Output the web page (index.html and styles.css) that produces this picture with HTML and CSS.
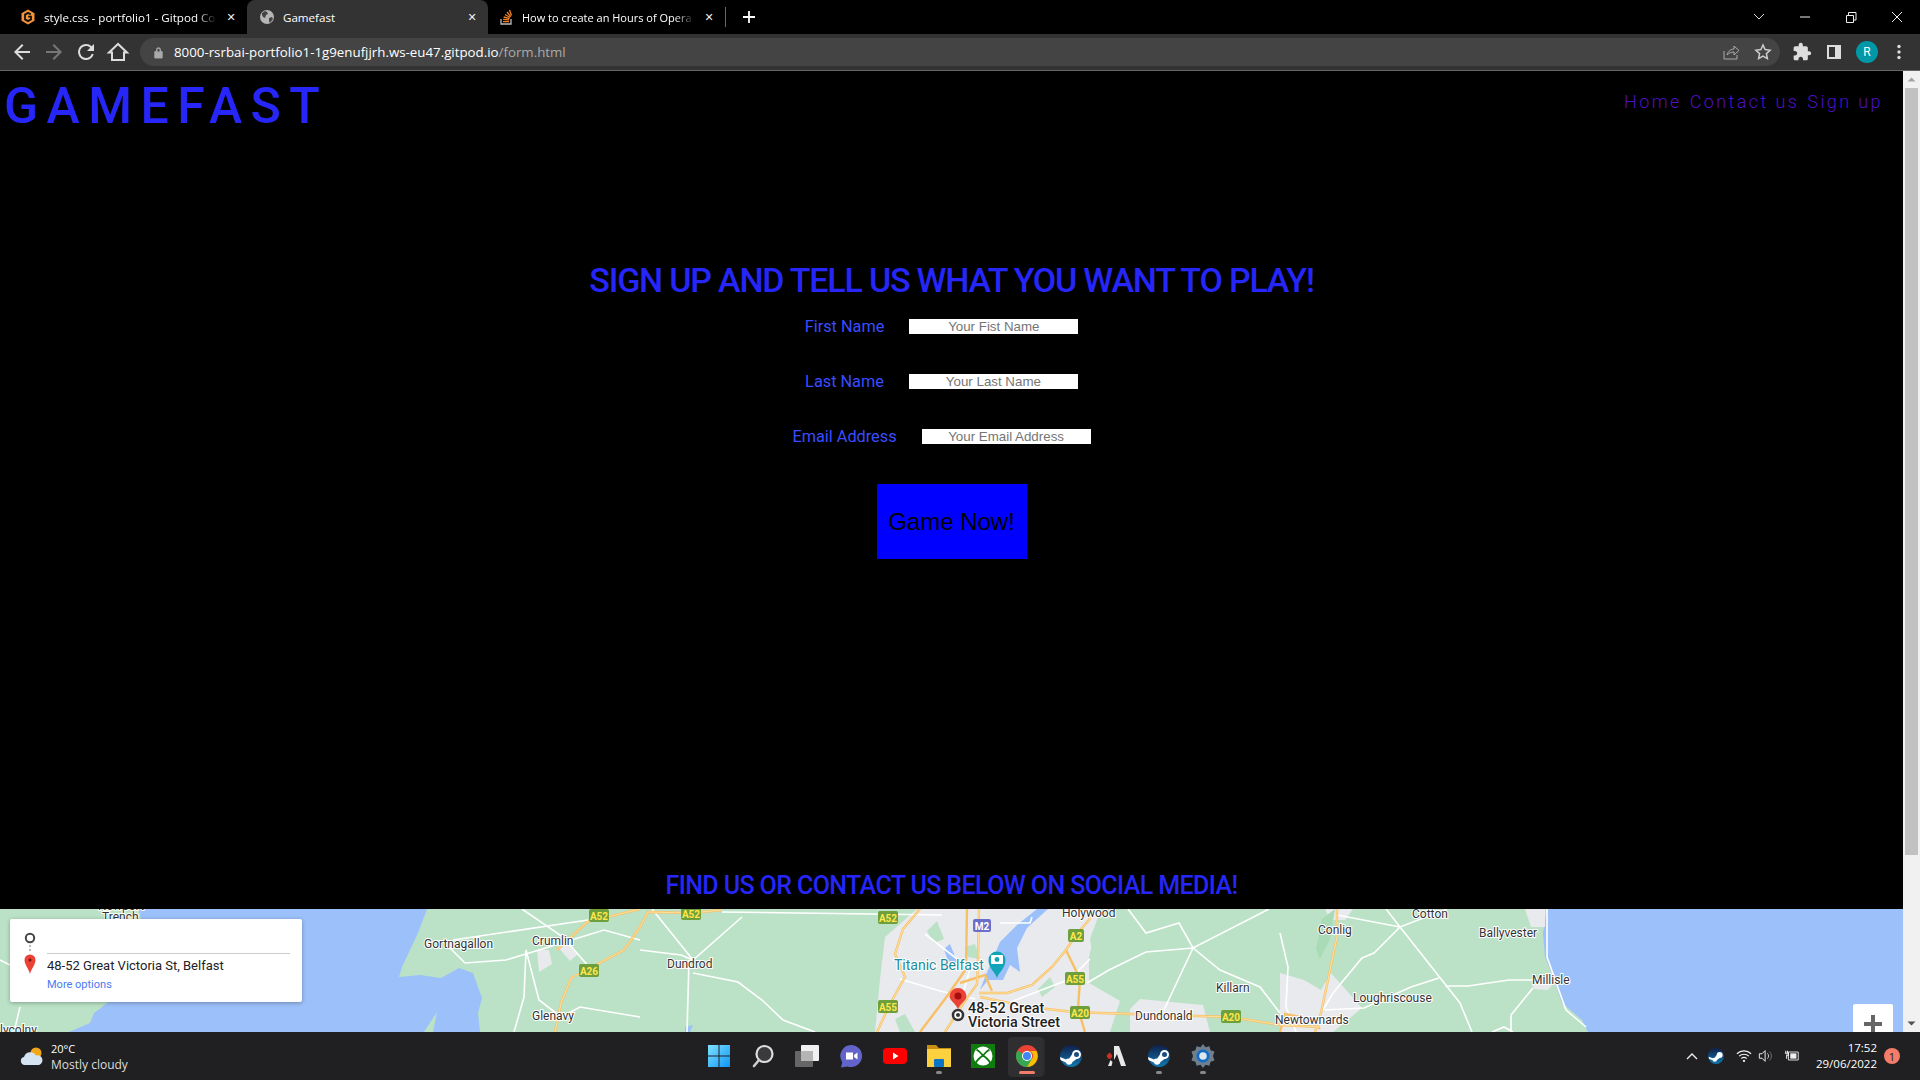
FILE: index.html
```html
<!DOCTYPE html>
<html lang="en">
<head>
  <meta charset="UTF-8" />
  <title>Gamefast</title>
  <link rel="stylesheet" href="styles.css">
</head>
<body>
  <!-- browser tabs -->
  <div class="tabstrip">
    <div class="tab">
      <svg class="favicon" viewBox="0 0 16 16"><path d="M8 .5 14.500 4.300v7.400L8 15.500 1.500 11.700V4.300z" fill="#f5923a"/><path d="M10.800 5.400 8 3.900 5 5.600v4.800L8 12.100l3-1.700V7.600H8.200" fill="none" stroke="#111" stroke-width="1.800"/></svg>
      <span class="tab-title">style.css - portfolio1 - Gitpod Co</span>
      <span class="tab-close">✕</span>
    </div>
    <div class="tab active">
      <svg class="favicon" viewBox="0 0 16 16"><circle cx="8" cy="8" r="7" fill="#b5b5b5"/><path d="M3 4l3-2 2 1 1 2-2 1-1 3-2-1-1-2zM10 9l3-1 1 2-3 4-1-2z" fill="#444"/></svg>
      <span class="tab-title">Gamefast</span>
      <span class="tab-close">✕</span>
    </div>
    <div class="tab">
      <svg class="favicon" viewBox="0 0 16 16"><path d="M3 10v5h10v-5" fill="none" stroke="#bbb" stroke-width="1.300"/><path d="M5 12.600h6M5.100 10.400l6 .5M5.700 8l5.800 1.600M7 5.500l5.200 3M9 3l3.800 4.600M11.500 1l2 5.500" stroke="#f48024" stroke-width="1.300"/></svg>
      <span class="tab-title">How to create an Hours of Opera</span>
      <span class="tab-close">✕</span>
    </div>
    <span class="tab-sep"></span>
    <svg class="new-tab" viewBox="0 0 14 14"><path d="M7 1v12M1 7h12" stroke="#fff" stroke-width="1.800"/></svg>
    <div class="window-btns">
      <svg viewBox="0 0 46 28"><path d="M18 11l5 5 5-5" fill="none" stroke="#ddd"/></svg>
      <svg viewBox="0 0 46 28"><path d="M18 14h10" stroke="#eee"/></svg>
      <svg viewBox="0 0 46 28"><path d="M18.500 12.500h7v7h-7zM20.500 12v-2.500h7.500v7.500h-2" fill="none" stroke="#eee"/></svg>
      <svg viewBox="0 0 46 28"><path d="M18 9l10 10M28 9l-10 10" stroke="#eee"/></svg>
    </div>
  </div>

  <!-- address bar -->
  <div class="toolbar">
    <svg class="tool" viewBox="0 0 24 24"><path d="M20 11H7.830l5.590-5.590L12 4l-8 8 8 8 1.410-1.410L7.830 13H20z" fill="#ddd"/></svg>
    <svg class="tool" viewBox="0 0 24 24"><path d="M4 11h12.170l-5.590-5.590L12 4l8 8-8 8-1.410-1.410L16.170 13H4z" fill="#777"/></svg>
    <svg class="tool" viewBox="0 0 24 24"><path d="M17.650 6.350A7.960 7.960 0 0 0 12 4a8 8 0 1 0 7.730 10h-2.080A6 6 0 1 1 12 6c1.660 0 3.140.69 4.220 1.780L13 11h7V4z" fill="#ddd"/></svg>
    <svg class="tool" viewBox="0 0 24 24"><path d="M12 4 3 12.500h3V20h12v-7.500h3z" fill="none" stroke="#ddd" stroke-width="2"/></svg>
    <div class="omnibox">
      <svg class="lock" viewBox="0 0 12 14"><path d="M2 6h8v7H2zM3.800 6V4a2.200 2.200 0 0 1 4.400 0v2" fill="#aaa" stroke="#aaa"/><path d="M4.800 6V4a1.200 1.200 0 0 1 2.400 0v2z" fill="#444"/></svg>
      <span class="url">8000-rsrbai-portfolio1-1g9enufjjrh.ws-eu47.gitpod.io<span class="url-path">/form.html</span></span>
      <svg class="omni-icon" viewBox="0 0 18 18"><path d="M2 8v8h13v-4" fill="none" stroke="#aaa"/><path d="M5 12c1-4 4-6 7-6V3l5 4.500L12 12V9c-3 0-5 1-7 3z" fill="none" stroke="#aaa"/></svg>
      <svg class="omni-icon" viewBox="0 0 18 18"><path d="M9 2l2.100 4.600 5 .6-3.700 3.400 1 5L9 13.100 4.600 15.600l1-5L1.900 7.200l5-.6z" fill="none" stroke="#ccc" stroke-width="1.500"/></svg>
    </div>
    <svg class="tool ext" viewBox="0 0 24 24"><path d="M20.500 11H19V7c0-1.100-.9-2-2-2h-4V3.500a2.500 2.500 0 0 0-5 0V5H4c-1.100 0-2 .9-2 2v3.800h1.500c1.500 0 2.700 1.200 2.700 2.700S5 16.200 3.500 16.200H2V20c0 1.100.9 2 2 2h3.800v-1.500c0-1.500 1.200-2.700 2.700-2.700s2.700 1.200 2.700 2.700V22H17c1.100 0 2-.9 2-2v-4h1.500a2.500 2.500 0 0 0 0-5z" fill="#ddd"/></svg>
    <svg class="tool panel" viewBox="0 0 24 24"><path d="M5 5h14v14H5z" fill="#ddd"/><path d="M7 7h6v10H7z" fill="#333"/></svg>
    <span class="avatar">R</span>
    <svg class="tool" viewBox="0 0 24 24"><circle cx="12" cy="6.500" r="1.700" fill="#ddd"/><circle cx="12" cy="12" r="1.700" fill="#ddd"/><circle cx="12" cy="17.500" r="1.700" fill="#ddd"/></svg>
  </div>

  <div class="viewport">
    <div class="page">
      <header class="site-header">
        <h1 class="logo">GAMEFAST</h1>
        <nav class="site-nav">
          <a>Home</a>
          <a>Contact us</a>
          <a>Sign up</a>
        </nav>
      </header>

      <section class="signup">
        <h2 class="signup-title">SIGN UP AND TELL US WHAT YOU WANT TO PLAY!</h2>
        <form class="signup-form">
          <div class="field">
            <label for="first">First Name</label>
            <input type="text" id="first" placeholder="Your Fist Name"/>
          </div>
          <div class="field">
            <label for="last">Last Name</label>
            <input type="text" id="last" placeholder="Your Last Name"/>
          </div>
          <div class="field">
            <label for="email">Email Address</label>
            <input type="email" id="email" placeholder="Your Email Address"/>
          </div>
          <button type="button" class="game-btn">Game Now!</button>
        </form>
      </section>

      <h2 class="find-us">FIND US OR CONTACT US BELOW ON SOCIAL MEDIA!</h2>

      <div class="map">
        <svg class="map-art" viewBox="0 0 1903 123">
          <rect width="1903" height="123" fill="#bbe2c6"/>
          <!-- water -->
          <path d="M139 0H427L418 24 402 58 399 68 420 66 441 69 459 59 473 64 478 78 482 89 478 104 480 123H433L437 103 424 123H69L90 114 94 104 102 98 150 60z" fill="#9cc0f9"/>
          <path d="M1547 0 1543 24 1545 48 1553 68 1562 94 1582 111 1588 123H1903V0z" fill="#9cc0f9"/>
          <!-- built up areas -->
          <path d="M885 28 917 0H1101L1089 48 1089 74 1120 92 1110 123H875L880 70z" fill="#e8eaed"/>
          <path d="M1130 100 1140 90 1203 96 1210 123H1130z" fill="#e8eaed"/>
          <path d="M1280 64 1304 71 1321 81 1331 64 1362 99 1333 123H1280z" fill="#e8eaed"/>
          <path d="M1525 0H1545V18H1531z" fill="#e8eaed"/>
          <path d="M1325 0H1353L1345 11H1330z" fill="#e8eaed"/>
          <path d="M1532 76H1552L1548 81 1534 80z" fill="#e8eaed"/>
          <path d="M537 41 549 41 552 55 539 63z" fill="#e8eaed"/>
          <path d="M558 38 564 45 570 52 578 45 564 30z" fill="#e8eaed"/>
          <!-- parks -->
          <path d="M927 22 937 12 944 30 934 34z M965 38 975 35 980 50 968 48z M1090 30 1101 0H1130L1120 30 1095 60z M895 110 905 105 915 123H900z M1038 80 1050 68 1055 78 1042 88z" fill="#bbe2c6"/>
          <path d="M1322 10 1335 0 1330 30 1320 50 1316 40z" fill="#a8dbb6"/>
          <!-- lough -->
          <path d="M1037 0H1048L1027 19 1017 39 1020 63 1010 56 1003 71 988 71 980 81 985 68 1000 33 1017 16z" fill="#9cc0f9"/>
          <path d="M944 40 950 35 958 55 948 52z M685 118 693 116 690 123 685 123z" fill="#9cc0f9"/>
          <!-- minor roads -->
          <g fill="none" stroke="#fff" stroke-width="1.600">
            <path d="M0 51 10 56M14 123 20 98"/>
            <path d="M453 31 588 11M449 38 465 54 506 51 539 41 604 21 640 31"/>
            <path d="M522 0 563 28 590 59M526 41 539 91 561 108 580 98 640 108M514 123 524 88 526 41"/>
            <path d="M640 41 681 46 693 51 742 8M652 0 693 51M689 51 687 123M693 64 738 73 762 91 783 111 815 123"/>
            <path d="M722 3 942 6M1000 14H1030L1032 8"/>
            <path d="M1087 74 1109 61 1146 43 1193 39 1220 61 1260 78 1280 104M1128 0 1146 24 1179 14 1193 39 1269 0M1193 39 1170 88 1164 101"/>
            <path d="M1280 24 1288 58 1286 98 1296 123M1337 6 1400 18 1447 0M1386 0 1400 18 1460 94 1472 123M1400 18 1374 44 1362 49 1333 84 1323 101M1439 69 1411 78 1364 99 1325 101"/>
            <path d="M1445 77 1468 77 1509 71 1533 71M1533 79 1511 106 1511 123M1492 123 1504 118 1513 123"/>
            <path d="M1547 0 1547 48 1566 101 1586 118"/>
            <path d="M900 70 940 82 975 90M925 25 970 60 960 95M1005 95 1070 70 1090 50"/>
          </g>
          <!-- main roads -->
          <g fill="none" stroke="#f8c066" stroke-width="2.400">
            <path d="M555 123 561 94 571 69 590 59 624 41 640 18 648 3 691 4 722 1"/>
            <path d="M557 41 587 13 640 0"/>
            <path d="M877 123 890 95 905 68 895 45 903 20 920 0"/>
            <path d="M979 0 978 50 977 75 965 92 945 123"/>
            <path d="M967 0 966 60 945 90 920 123"/>
            <path d="M979 84 1007 84 1032 76 1052 58 1066 41 1076 26 1089 11 1093 0"/>
            <path d="M980 88 1030 98 1073 103 1131 105 1231 108 1280 116 1320 118"/>
            <path d="M1066 41 1080 70 1078 100 1085 123"/>
            <path d="M960 74 985 66 992 82"/>
            <path d="M1337 0 1337 28 1321 104 1315 123"/>
            <path d="M1280 123 1285 105 1310 110 1320 120"/>
          </g>
          <g fill="none" stroke="#feeab0" stroke-width=".8">
            <path d="M555 123 561 94 571 69 590 59 624 41 640 18 648 3 691 4 722 1"/>
            <path d="M557 41 587 13 640 0"/>
            <path d="M877 123 890 95 905 68 895 45 903 20 920 0"/>
            <path d="M979 0 978 50 977 75 965 92 945 123"/>
            <path d="M979 84 1007 84 1032 76 1052 58 1066 41 1076 26 1089 11 1093 0"/>
            <path d="M980 88 1030 98 1073 103 1131 105 1231 108 1280 116 1320 118"/>
            <path d="M1337 0 1337 28 1321 104 1315 123"/>
          </g>
          <!-- road badges -->
          <g class="badge">
            <rect x="589" y="0" width="20" height="13" rx="2"/><text x="599" y="10.500">A52</text>
            <rect x="681" y="-2" width="20" height="13" rx="2"/><text x="691" y="8.500">A52</text>
            <rect x="579" y="55" width="20" height="13" rx="2"/><text x="589" y="65.500">A26</text>
            <rect x="878" y="2" width="20" height="13" rx="2"/><text x="888" y="12.500">A52</text>
            <rect x="1068" y="20" width="16" height="13" rx="2"/><text x="1076" y="30.500">A2</text>
            <rect x="1065" y="63" width="20" height="13" rx="2"/><text x="1075" y="73.500">A55</text>
            <rect x="878" y="91" width="20" height="13" rx="2"/><text x="888" y="101.500">A55</text>
            <rect x="1070" y="97" width="20" height="13" rx="2"/><text x="1080" y="107.500">A20</text>
            <rect x="1221" y="101" width="20" height="13" rx="2"/><text x="1231" y="111.500">A20</text>
          </g>
          <rect x="973" y="10" width="18" height="13" rx="2" fill="#6b6fc9"/>
          <text class="badge-m" x="982" y="20.500">M2</text>
          <!-- place names -->
          <g class="place">
            <text x="98" y="1">Newport</text>
            <text x="102" y="12">Trench</text>
            <text x="0" y="125">lycolny</text>
            <text x="424" y="39">Gortnagallon</text>
            <text x="532" y="36">Crumlin</text>
            <text x="532" y="111">Glenavy</text>
            <text x="667" y="59">Dundrod</text>
            <text x="1062" y="8">Holywood</text>
            <text x="1216" y="83">Killarn</text>
            <text x="1135" y="111">Dundonald</text>
            <text x="1412" y="9">Cotton</text>
            <text x="1318" y="25">Conlig</text>
            <text x="1479" y="28">Ballyvester</text>
            <text x="1532" y="75">Millisle</text>
            <text x="1353" y="93">Loughriscouse</text>
            <text x="1275" y="115">Newtownards</text>
          </g>
          <text class="place-teal" x="894" y="61">Titanic Belfast</text>
          <text class="place-bold" x="968" y="104">48-52 Great</text>
          <text class="place-bold" x="968" y="118">Victoria Street</text>
          <!-- pins -->
          <path d="M997 69c-2-6-8.500-10-8.500-18a8.500 8.500 0 0 1 17 0c0 8-6.500 12-8.500 18z" fill="#12a5b8"/>
          <rect x="991" y="46" width="12" height="9" rx="1" fill="#fff"/>
          <circle cx="997" cy="50.500" r="2.400" fill="#12a5b8"/>
          <path d="M958 100c-2-5-8.500-9-8.500-12.500a8.500 8.500 0 0 1 17 0c0 3.500-6.500 7.500-8.500 12.500z" fill="#ea4335"/>
          <circle cx="958" cy="87" r="3.500" fill="#a50e0e"/>
          <circle cx="958" cy="106" r="5" fill="#fff" stroke="#333" stroke-width="2.500"/>
          <circle cx="958" cy="106" r="2" fill="#333"/>
        </svg>

        <div class="directions">
          <svg class="dir-icons" viewBox="0 0 16 46">
            <circle cx="8" cy="8" r="4.200" fill="none" stroke="#444" stroke-width="2"/>
            <circle cx="8" cy="16" r="1.200" fill="#bbb"/><circle cx="8" cy="20" r="1.200" fill="#bbb"/>
            <path d="M8 44c-1-5-5.500-9-5.500-14a5.500 5.500 0 0 1 11 0c0 5-4.500 9-5.500 14z" fill="#ea4335"/>
            <circle cx="8" cy="30" r="1.500" fill="#7a1410"/>
          </svg>
          <div class="dir-text">
            <div class="dir-address">48-52 Great Victoria St, Belfast</div>
            <a class="dir-more">More options</a>
          </div>
        </div>
        <div class="zoom-btn"><svg viewBox="0 0 18 18"><path d="M9 0v18M0 9h18" stroke="#666" stroke-width="4"/></svg></div>
      </div>
    </div>

    <div class="scrollbar">
      <svg class="arrow" viewBox="0 0 17 17"><path d="M4.500 10.500h8l-4-4z" fill="#a3a3a3"/></svg>
      <div class="thumb"></div>
      <svg class="arrow down" viewBox="0 0 17 17"><path d="M4.500 6.500h8l-4 4z" fill="#505050"/></svg>
    </div>
  </div>

  <!-- windows taskbar -->
  <div class="taskbar">
    <div class="weather">
      <svg class="weather-icon" viewBox="0 0 24 20"><circle cx="16" cy="6" r="5.500" fill="#f2a71b"/><path d="M5 18a4 4 0 0 1-1-7.900A6.500 6.500 0 0 1 16 8.500a4.800 4.800 0 0 1 3 9.500z" fill="#d6e4f2"/></svg>
      <div>
        <div class="temp">20°C</div>
        <div class="sky">Mostly cloudy</div>
      </div>
    </div>

    <div class="task-icons">
      <span class="task"><svg viewBox="0 0 24 24"><defs><linearGradient id="win" x1="0" y1="0" x2="1" y2="1"><stop offset="0" stop-color="#7fe3ff"/><stop offset="1" stop-color="#0f95f5"/></linearGradient></defs><path d="M1 1h10.500v10.500H1zM12.500 1H23v10.500H12.500zM1 12.500h10.500V23H1zM12.500 12.500H23V23H12.500z" fill="url(#win)"/></svg></span>
      <span class="task"><svg viewBox="0 0 24 24"><circle cx="13.500" cy="10" r="8" fill="#3a3a3c" stroke="#dedede" stroke-width="2.200"/><path d="M8 16 3 22" stroke="#ccc" stroke-width="2.600" stroke-linecap="round"/></svg></span>
      <span class="task"><svg viewBox="0 0 24 24"><rect x="6" y="1" width="18" height="16" rx="1" fill="#f0f0f0"/><rect x="0" y="7" width="18" height="16" rx="1" fill="#6e6e6e" fill-opacity=".9"/><rect x="6" y="7" width="12" height="10" fill="#b5b5b5"/></svg></span>
      <span class="task"><svg viewBox="0 0 24 24"><path d="M12 1a11 11 0 1 1-3.500 21.400L2 23.500l1.300-5.300A11 11 0 0 1 12 1z" fill="#6264c9"/><path d="M7 8.500h7v7H7zM15 11l3.500-2.500v7L15 13z" fill="#fff"/></svg></span>
      <span class="task"><svg viewBox="0 0 24 24"><rect y="4" width="24" height="16" rx="4" fill="#f00"/><path d="M10 8.500v7l5.500-3.500z" fill="#fff"/></svg></span>
      <span class="task open"><svg viewBox="0 0 24 24"><path d="M0 1h9l3 3h12v4H0z" fill="#c98f12"/><path d="M0 5h24v18H0z" fill="#fbd13f"/><rect x="7" y="15" width="10" height="8" rx="1" fill="#0b74c8"/></svg></span>
      <span class="task"><svg viewBox="0 0 24 24"><rect width="24" height="24" fill="#107c10"/><circle cx="12" cy="12" r="9.500" fill="#fff"/><path d="M5.500 5.500C8 7 10 9 12 11.500 14 9 16 7 18.500 5.500M4.500 19.500C6 16 9 13.500 12 11.500 15 13.500 18 16 19.500 19.500" fill="none" stroke="#107c10" stroke-width="2"/></svg></span>
      <span class="task active-app"><svg viewBox="0 0 24 24"><circle cx="12" cy="12" r="11" fill="#ea4335"/><path d="M12 12 2.500 17.500A11 11 0 0 1 2.500 6.500z" fill="#34a853"/><path d="M12 12 21.500 17.500A11 11 0 0 1 12 23 11 11 0 0 1 2.500 17.500z" fill="#34a853"/><path d="M12 7h9.500A11 11 0 0 1 12 23l4.500-7.500A5 5 0 0 0 12 7z" fill="#fbbc04"/><circle cx="12" cy="12" r="5" fill="#fff"/><circle cx="12" cy="12" r="4" fill="#4285f4"/></svg></span>
      <span class="task"><svg viewBox="0 0 24 24"><defs><linearGradient id="st1" x1="0" y1="0" x2="0" y2="1"><stop offset="0" stop-color="#10204a"/><stop offset="1" stop-color="#1177ae"/></linearGradient></defs><circle cx="12" cy="12" r="11" fill="url(#st1)"/><path d="M1 13l6 2.500a3.500 3.500 0 0 1 3-.8l3-4.200a4.500 4.500 0 1 1 4.500 4.500l-4 3a3.500 3.500 0 0 1-6.700.5L1.500 16z" fill="#fff"/><circle cx="17.500" cy="10.500" r="2.500" fill="#1a4e80"/></svg></span>
      <span class="task"><svg viewBox="0 0 24 24"><path d="M11 2h5l7 20h-5l-4-12-3 6z" fill="#e8e8e8"/><path d="M5 22l2.500-6 2 2-1 4z" fill="#e8e8e8"/><path d="M7 8c0 2 3 2 2 5l-1.500 2-1-.5-1 .5L4 13c-1-3 2-3 3-5z" fill="#c9301f"/></svg></span>
      <span class="task open"><svg viewBox="0 0 24 24"><circle cx="12" cy="12" r="11" fill="url(#st1)"/><path d="M1 13l6 2.500a3.500 3.500 0 0 1 3-.8l3-4.200a4.500 4.500 0 1 1 4.500 4.500l-4 3a3.500 3.500 0 0 1-6.700.5L1.500 16z" fill="#fff"/><circle cx="17.500" cy="10.500" r="2.500" fill="#1a4e80"/></svg></span>
      <span class="task open"><svg viewBox="0 0 24 24"><path d="M12 0l2.500 3.200 4-1 1 4 4 1.300-1.500 4.500 1.500 4.500-4 1.300-1 4-4-1L12 24l-2.500-3.200-4 1-1-4-4-1.300L2 12 .5 7.500l4-1.300 1-4 4 1z" fill="#6f7f8e"/><circle cx="12" cy="12" r="6.500" fill="#0f6cc4"/><circle cx="12" cy="12" r="3.800" fill="#dbe6f0"/></svg></span>
    </div>

    <div class="tray">
      <svg class="tray-icon tray-up" viewBox="0 0 16 16"><path d="M3 11l5-5 5 5" fill="none" stroke="#eee" stroke-width="1.400"/></svg>
      <svg class="tray-icon tray-steam" viewBox="0 0 24 24"><circle cx="12" cy="12" r="12" fill="url(#st1)"/><path d="M1 13l6 2.500a3.500 3.500 0 0 1 3-.8l3-4.200a4.500 4.500 0 1 1 4.500 4.500l-4 3a3.500 3.500 0 0 1-6.700.5L1.500 16z" fill="#fff"/></svg>
      <svg class="tray-icon tray-wifi" viewBox="0 0 18 16"><path d="M1 5.500a11.500 11.500 0 0 1 16 0M3.500 8.200a8 8 0 0 1 11 0M6 10.800a4.500 4.500 0 0 1 6 0" fill="none" stroke="#eee" stroke-width="1.300"/><circle cx="9" cy="13.500" r="1.300" fill="#eee"/></svg>
      <svg class="tray-icon tray-vol" viewBox="0 0 18 16"><path d="M1.500 5.500h3L8 2v12l-3.500-3.500h-3z" fill="none" stroke="#eee" stroke-width="1.100"/><path d="M10.500 5a4 4 0 0 1 0 6" fill="none" stroke="#ddd"/><path d="M13 3a7 7 0 0 1 0 10" fill="none" stroke="#777"/></svg>
      <svg class="tray-icon tray-power" viewBox="0 0 18 16"><path d="M5 3.500h11v9H5z" fill="none" stroke="#eee"/><path d="M7 5h7v6H7z" fill="#eee"/><path d="M2 2v3M4 2v3M1 5h4v2H3v4" fill="none" stroke="#eee" stroke-width="1.200"/></svg>
      <div class="clock">
        <div>17:52</div>
        <div>29/06/2022</div>
      </div>
      <span class="notif">1</span>
    </div>
  </div>
</body>
</html>
```

FILE: styles.css
```css
* {
  box-sizing: border-box;
}
html, body {
  margin: 0;
  height: 100%;
}
body {
  display: flex;
  flex-direction: column;
  height: 1080px;
  overflow: hidden;
  background: #000;
  font-family: "Roboto", sans-serif;
}

/* browser chrome */
.tabstrip {
  display: flex;
  align-items: center;
  height: 34px;
  flex-shrink: 0;
  background: #000;
  padding-left: 8px;
  font-family: "Open Sans", sans-serif;
  font-size: 11.600px;
  color: #fff;
}
.tab {
  display: flex;
  align-items: center;
  width: 239px;
  height: 34px;
  padding: 0 8px 0 12px;
}
.tab.active {
  background: #333;
  border-radius: 8px 8px 0 0;
  width: 241px;
}
.tab:nth-child(3) {
  width: 237px;
  padding-left: 10px;
  font-size: 11px;
}
.favicon {
  width: 16px;
  height: 16px;
  flex-shrink: 0;
  margin-right: 8px;
}
.tab-title {
  flex: 1;
  overflow: hidden;
  white-space: nowrap;
  -webkit-mask-image: linear-gradient(to right, #000 88%, transparent 100%);
  mask-image: linear-gradient(to right, #000 88%, transparent 100%);
}
.tab.active .tab-title {
  -webkit-mask-image: none;
  mask-image: none;
}
.tab-close {
  width: 16px;
  margin-left: 6px;
  text-align: center;
  font-family: "DejaVu Sans", sans-serif;
  font-size: 11px;
  font-weight: bold;
  color: #eee;
}
.tab-sep {
  width: 1px;
  height: 20px;
  background: #666;
}
.new-tab {
  width: 14px;
  height: 14px;
  margin-left: 16px;
}
.window-btns {
  display: flex;
  margin-left: auto;
}
.window-btns svg {
  width: 46px;
  height: 28px;
}

.toolbar {
  display: flex;
  align-items: center;
  height: 37px;
  flex-shrink: 0;
  background: #333;
  border-bottom: 1px solid #666;
  padding-left: 10px;
}
.tool {
  width: 24px;
  height: 24px;
  margin-right: 8px;
  flex-shrink: 0;
}
.omnibox {
  display: flex;
  align-items: center;
  width: 1640px;
  height: 28px;
  margin: 0 10px 0 2px;
  background: #444;
  border-radius: 14px;
  padding: 0 8px 0 13px;
  font-family: "Open Sans", sans-serif;
  font-size: 13.300px;
  color: #fff;
}
.lock {
  width: 11px;
  height: 13px;
  margin-right: 10px;
}
.url {
  flex: 1;
  white-space: nowrap;
}
.url-path {
  color: #aaa;
}
.omni-icon {
  width: 18px;
  height: 18px;
  margin-left: 14px;
}
.tool.ext {
  width: 20px;
  height: 20px;
  margin-left: 2px;
  margin-right: 10px;
}
.tool.panel {
  margin-right: 10px;
}
.avatar {
  display: flex;
  align-items: center;
  justify-content: center;
  width: 22px;
  height: 22px;
  margin-right: 9px;
  border-radius: 50%;
  background: #0097a7;
  color: #fff;
  font-size: 12px;
  flex-shrink: 0;
}

/* the page itself */
.viewport {
  display: flex;
  flex: 1;
  min-height: 0;
}
.page {
  flex: 1;
  min-width: 0;
  display: flex;
  flex-direction: column;
  background: #000;
}
.site-header {
  display: flex;
  justify-content: space-between;
  padding: 0 20px 0 4px;
}
.logo {
  margin: 0;
  padding-top: 6px;
  font-size: 50px;
  font-weight: 500;
  letter-spacing: 8.500px;
  color: #2626f8;
}
.site-nav {
  display: flex;
  gap: 8px;
  padding-top: 20px;
  font-size: 18px;
  font-weight: 300;
  letter-spacing: 2.400px;
  color: #5010c8;
}
.signup {
  text-align: center;
  margin-top: 125px;
}
.signup-title {
  margin: 0;
  font-size: 34px;
  font-weight: 500;
  letter-spacing: -1.200px;
  color: #2626f8;
}
.signup-form {
  display: flex;
  flex-direction: column;
  align-items: center;
  margin-top: -1px;
}
.field {
  display: flex;
  align-items: center;
  gap: 25px;
  height: 55px;
  padding-right: 20px;
}
.field label {
  font-size: 16.300px;
  color: #3a4cff;
}
.field input {
  width: 169px;
  height: 15px;
  padding: 0;
  border: none;
  font-family: "Liberation Sans", sans-serif;
  font-size: 13.330px;
  text-align: center;
}
.game-btn {
  width: 150px;
  height: 75px;
  margin-top: 20px;
  border: none;
  background: #00f;
  color: #000;
  font-family: "Liberation Sans", sans-serif;
  font-size: 24px;
}
.find-us {
  margin: auto 0 0;
  padding-bottom: 9px;
  text-align: center;
  font-size: 25px;
  font-weight: 500;
  letter-spacing: -0.600px;
  color: #2626f8;
}

/* google map embed */
.map {
  position: relative;
  height: 123px;
  overflow: hidden;
  background: #bbe2c6;
}
.map-art {
  display: block;
  width: 1903px;
  height: 123px;
}
.place text {
  font-size: 12px;
  fill: #333;
  stroke: #fff;
  stroke-width: 2px;
  paint-order: stroke;
}
.place-teal {
  font-size: 14px;
  fill: #1e8a9a;
  stroke: #fff;
  stroke-width: 2px;
  paint-order: stroke;
}
.place-bold {
  font-size: 14.400px;
  font-weight: 500;
  fill: #222;
  stroke: #fff;
  stroke-width: 2px;
  paint-order: stroke;
}
.badge rect {
  fill: #6f9e3c;
}
.badge text {
  font-size: 10px;
  font-weight: 700;
  fill: #fde74c;
  text-anchor: middle;
}
.badge-m {
  font-size: 10px;
  font-weight: 700;
  fill: #fff;
  text-anchor: middle;
}
.directions {
  position: absolute;
  left: 10px;
  top: 10px;
  display: flex;
  width: 292px;
  height: 83px;
  padding: 11px 12px 0 12px;
  background: #fff;
  border-radius: 2px;
  box-shadow: 0 1px 4px rgba(0, 0, 0, 0.3);
}
.dir-icons {
  width: 16px;
  height: 46px;
  margin-right: 9px;
  flex-shrink: 0;
}
.dir-text {
  flex: 1;
  padding-top: 23px;
}
.dir-address {
  border-top: 1px solid #ccc;
  padding-top: 4px;
  font-size: 13px;
  line-height: 16px;
  color: #222;
}
.dir-more {
  display: block;
  margin-top: 4px;
  font-size: 11px;
  color: #4a7bf0;
}
.zoom-btn {
  position: absolute;
  left: 1853px;
  top: 95px;
  width: 40px;
  height: 40px;
  padding-top: 11px;
  background: #fff;
  border-radius: 2px;
  text-align: center;
}
.zoom-btn svg {
  width: 18px;
  height: 18px;
}

.scrollbar {
  display: flex;
  flex-direction: column;
  width: 17px;
  background: #f1f1f1;
}
.arrow {
  width: 17px;
  height: 17px;
  flex-shrink: 0;
}
.arrow.down {
  margin-top: auto;
}
.thumb {
  width: 13px;
  height: 767px;
  margin-left: 2px;
  background: #c1c1c1;
}

/* windows taskbar */
.taskbar {
  display: grid;
  grid-template-columns: 1fr auto 1fr;
  align-items: center;
  height: 48px;
  flex-shrink: 0;
  background: #202022;
  font-family: "Open Sans", sans-serif;
  font-size: 12px;
  color: #fff;
}
.weather {
  display: flex;
  align-items: center;
  padding: 2px 0 0 20px;
}
.weather-icon {
  width: 24px;
  height: 20px;
  margin-right: 7px;
}
.temp {
  font-size: 11px;
  line-height: 16px;
}
.sky {
  line-height: 16px;
  color: #ddd;
}
.task-icons {
  display: flex;
  padding-left: 2px;
}
.task {
  position: relative;
  display: flex;
  align-items: center;
  justify-content: center;
  width: 44px;
  height: 48px;
}
.task svg {
  width: 24px;
  height: 24px;
}
.task.open::after,
.task.active-app::after {
  content: "";
  position: absolute;
  left: 19px;
  bottom: 6px;
  width: 6px;
  height: 3px;
  border-radius: 2px;
  background: #888;
}
.task.active-app::before {
  content: "";
  position: absolute;
  left: 3px;
  top: 5px;
  width: 35px;
  height: 40px;
  border-radius: 4px;
  background: #2f2f31;
  box-shadow: 3px 0 0 -1px #2a2a2c;
}
.task.active-app svg {
  position: relative;
}
.task.active-app::after {
  left: 14px;
  width: 16px;
  background: #f47c68;
}
.tray {
  display: flex;
  align-items: center;
  justify-content: flex-end;
  padding-right: 20px;
}
.tray-icon {
  width: 16px;
  height: 16px;
  flex-shrink: 0;
}
.tray-up {
  margin-right: 8px;
}
.tray-steam {
  margin-right: 12px;
}
.tray-wifi {
  margin-right: 6px;
}
.tray-vol {
  margin-right: 10px;
}
.tray-power {
  margin-right: 16px;
}
.clock {
  font-size: 11.500px;
  text-align: right;
  line-height: 16px;
}
.notif {
  display: flex;
  align-items: center;
  justify-content: center;
  width: 16px;
  height: 16px;
  margin-left: 7px;
  border-radius: 50%;
  background: #f47c68;
  color: #222;
  font-size: 11px;
}
```
